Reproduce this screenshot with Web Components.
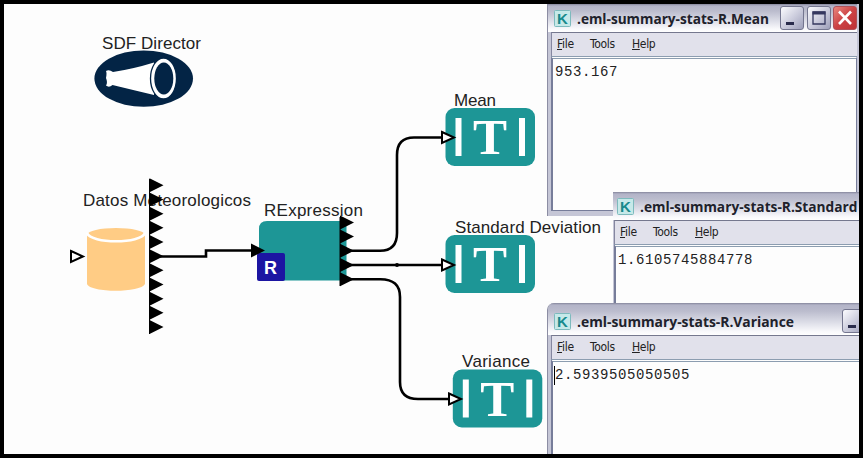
<!DOCTYPE html>
<html lang="es"><head><meta charset="utf-8"><title>Kepler workflow</title>
<style>html,body{margin:0;width:863px;height:458px;overflow:hidden;background:#000}</style></head>
<body>
<work-desk>
  <flow-graph></flow-graph>
  <stat-window class="std" heading=".eml-summary-stats-R.Standard" fit="217.500" style="--bar:28px">1.6105745884778</stat-window>
  <stat-window class="mean" heading=".eml-summary-stats-R.Mean" fit="192" controls="3" style="--bar:28px;--br:2px">953.167</stat-window>
  <stat-window class="var" heading=".eml-summary-stats-R.Variance" fit="217" controls="1" caret style="--bar:32px;--radius:7px">2.5939505050505</stat-window>
</work-desk>
<script>
class WorkDesk extends HTMLElement{
  constructor(){super();this.attachShadow({mode:'open'}).innerHTML=`<style>
  :host{display:block;position:relative;box-sizing:border-box;width:863px;height:458px;border:4px solid #000;background:#fdfdfd;overflow:hidden}
  ::slotted(flow-graph){position:absolute;left:-4px;top:-4px}
  ::slotted(stat-window){position:absolute}
  ::slotted(.mean){left:543px;top:0;width:312px;height:212px}
  ::slotted(.std){left:606px;top:188px;width:300px;height:130px;z-index:1;clip-path:inset(0 0 0 3px)}
  ::slotted(.var){left:543px;top:299px;width:319px;height:180px;z-index:2}
  </style><slot></slot>`}
}
class FlowGraph extends HTMLElement{
  constructor(){super();
  const tri=(x,y)=>`<path d="M${x} ${y-7}L${x+14} ${y}L${x} ${y+7}Z"/>`;
  const open=(x,y)=>`<path d="M${x} ${y-5.5}L${x+12} ${y}L${x} ${y+5.5}Z" fill="#fff" stroke="#000" stroke-width="2"/>`;
  const actor=(x,y)=>`<g transform="translate(${x} ${y})"><rect width="89.5" height="58" rx="9" fill="#1d9696"/><rect x="10" y="10" width="6" height="38" fill="#fff"/><rect x="73.5" y="10" width="6" height="38" fill="#fff"/><text class="glyph" x="44.5" y="46" text-anchor="middle" fill="#fff">T</text></g>`;
  const label=(x,y,w,t)=>`<text x="${x}" y="${y}" textLength="${w}" fill="#222">${t}</text>`;
  this.attachShadow({mode:'open'}).innerHTML=`<style>:host{display:block;width:863px;height:458px}svg{display:block}text{font-family:"Liberation Sans",Arial,sans-serif;font-size:17px}text.glyph{font:700 51px "Liberation Serif",serif}</style>
  <svg width="863" height="458">
   <ellipse cx="143.7" cy="78.6" rx="49.3" ry="28.2" fill="#032445"/>
   <path d="M106 71Q109 69 113 72Q133 69 154 62.5L154 95Q133 90 112.500 85Q109 88 106 85.500Q108 83 106 78Q107 73 106 71Z" fill="#fff"/>
   <ellipse cx="163.500" cy="78.500" rx="13" ry="20.500" fill="#fff" stroke="#032445" stroke-width="1.300"/>
   <ellipse cx="163.800" cy="78.500" rx="9.500" ry="16" fill="#032445"/>
   ${label(102,49,99,'SDF Director')}
   <path d="M87 235V284C90 293 141 293 145 284V235Z" fill="#ffcc85"/>
   <ellipse cx="116" cy="234.500" rx="28.500" ry="6.500" fill="#ffcc85"/>
   <path d="M87 233C91 244 141 244 145 233" fill="none" stroke="#fff" stroke-width="2.500"/>
   ${label(83,206,168,'Datos Meteorologicos')}
   ${open(71,256.5)}
   <path d="M149.500 179V334" stroke="#000"/>
   ${[0,1,2,3,4,5,6,7,8,9,10].map(i=>tri(149.5,185.3+i*14.17)).join('')}
   <path d="M259 229q0-8 8-8H346.500V280.500H259Z" fill="#1d9696"/>
   <rect x="257" y="253" width="28" height="28" rx="2" fill="#1c15a2"/>
   <text x="270.500" y="274" text-anchor="middle" font-weight="700" style="font-size:18px" fill="#fff">R</text>
   ${tri(251,250.5)}
   ${label(264,216,99,'RExpression')}
   <path d="M340 217V286" stroke="#000"/>
   ${[222.5,236.5,250.8,265,279.2].map(y=>tri(340,y)).join('')}
   <g fill="none" stroke="#000" stroke-width="2.600">
    <path d="M158 256.500H206V250.500H254"/>
    <path d="M348 250.800H380Q397 250.800 397 233V155Q397 137.500 414 137.500H442"/>
    <path d="M348 265H442"/>
    <path d="M348 279.200H380Q400 279 400 297V382Q400 399 418 399H449"/>
   </g><circle cx="397" cy="265" r="2"/>
   ${actor(445.5,108)}${actor(445.5,235)}${actor(452.8,369.5)}
   ${open(442,137.5)}${open(442,265)}${open(449,399)}
   ${label(454,106,42,'Mean')}${label(455,233,146,'Standard Deviation')}${label(462,367,68,'Variance')}
  </svg>`}
}
class KeplerIcon extends HTMLElement{
  constructor(){super();this.attachShadow({mode:'open'}).innerHTML=`<style>:host{display:block;width:17px;height:17px}svg{display:block}</style>
  <svg width="17" height="17"><rect x=".5" y=".5" width="16" height="16" rx="1" fill="#c6e9e9" stroke="#7dbabd"/><text x="8.5" y="13.500" text-anchor="middle" font-family="Liberation Sans,sans-serif" font-size="15" font-weight="700" fill="#178a8c">K</text></svg>`}
}
class WinButton extends HTMLElement{
  connectedCallback(){const k=this.getAttribute('kind');
  const g={min:'<path d="M6 16h8v3H6z" fill="#2a2c4c"/>',max:'<path d="M6 6h12v12H6z" fill="none" stroke="#34375e" stroke-width="1.300"/><path d="M5.500 5.500h13v3h-13z" fill="#34375e"/>',close:'<path d="M6 5.500L18 18M18 5.500L6 18" stroke="#fff" stroke-width="2.600"/>'}[k];
  this.attachShadow({mode:'open'}).innerHTML=`<style>:host{display:block;box-sizing:border-box;width:24px;height:24px;border:1px solid ${k=='close'?'#b05058':'#74768f'};border-radius:3px;background:${k=='close'?'linear-gradient(135deg,#e9877f,#cc4244 50%,#bd3236)':'linear-gradient(135deg,#fcfcff,#c9cadb 55%,#9d9fb9)'}}svg{display:block;margin:-1px}</style><svg width="24" height="24">${g}</svg>`}
}
class StatWindow extends HTMLElement{
  connectedCallback(){const n=+this.getAttribute('controls')||0;
  this.attachShadow({mode:'open'}).innerHTML=`<style>
  :host{display:flex;flex-direction:column;box-sizing:border-box;background:#c5c6d6;border-radius:var(--radius,0) 0 0 0;overflow:hidden;border-left:1px solid #8c8da3;padding:0 var(--br,0) 5px 0}
  header{flex:none;display:flex;height:var(--bar);box-sizing:border-box;align-items:flex-end;padding:0 0 5px 6px;gap:6px;background:linear-gradient(#85869c 0,#b3b4c8 2px,#bbbccd 25%,#dcdde7 60%,#f8f8fb 88%,#fff)}
  header svg{display:block;flex:none;overflow:visible}
  .ctl{display:flex;gap:2.500px;margin-left:auto;margin-bottom:-3px;flex:none}
  nav{flex:none;display:flex;gap:15px;box-sizing:border-box;height:24px;margin-left:3px;border-top:1.500px solid #75788e;border-left:1px solid #8587a0;background:#e1e1eb;padding:4px 0 0 5px;font:12px/15px "DejaVu Sans Condensed","DejaVu Sans",sans-serif;color:#222;letter-spacing:-.3px}
  nav span:first-child{width:18px}nav span:nth-child(2){width:27px}
  nav u{text-underline-offset:1px}
  main{flex:1;position:relative;margin-left:3px;border:1px solid #777d9a;border-left-width:2px;border-top:3px double #8c9db0;background:#fdfdfd;padding:4px 0 0 2px;font:14px/19px "Liberation Mono","Courier New",monospace;letter-spacing:.6px;color:#222}
  i{position:absolute;left:1px;top:4px;width:1px;height:19px;background:#000}
  </style><header><kepler-icon></kepler-icon><svg width="${this.getAttribute('fit')}" height="17"><text x="0" y="14" textLength="${this.getAttribute('fit')}" lengthAdjust="spacingAndGlyphs" font-family="Open Sans,Noto Sans,sans-serif" font-weight="700" font-size="15" fill="#20212b">${this.getAttribute('heading')}</text></svg>
  <div class="ctl">${['min','max','close'].slice(0,n).map(k=>`<win-button kind="${k}"></win-button>`).join('')}</div></header>
  <nav><span><u>F</u>ile</span><span>Tools</span><span><u>H</u>elp</span></nav><main>${this.hasAttribute('caret')?'<i></i>':''}<slot></slot></main>`}
}
customElements.define('work-desk',WorkDesk);customElements.define('flow-graph',FlowGraph);customElements.define('kepler-icon',KeplerIcon);customElements.define('win-button',WinButton);customElements.define('stat-window',StatWindow);
</script></body></html>
